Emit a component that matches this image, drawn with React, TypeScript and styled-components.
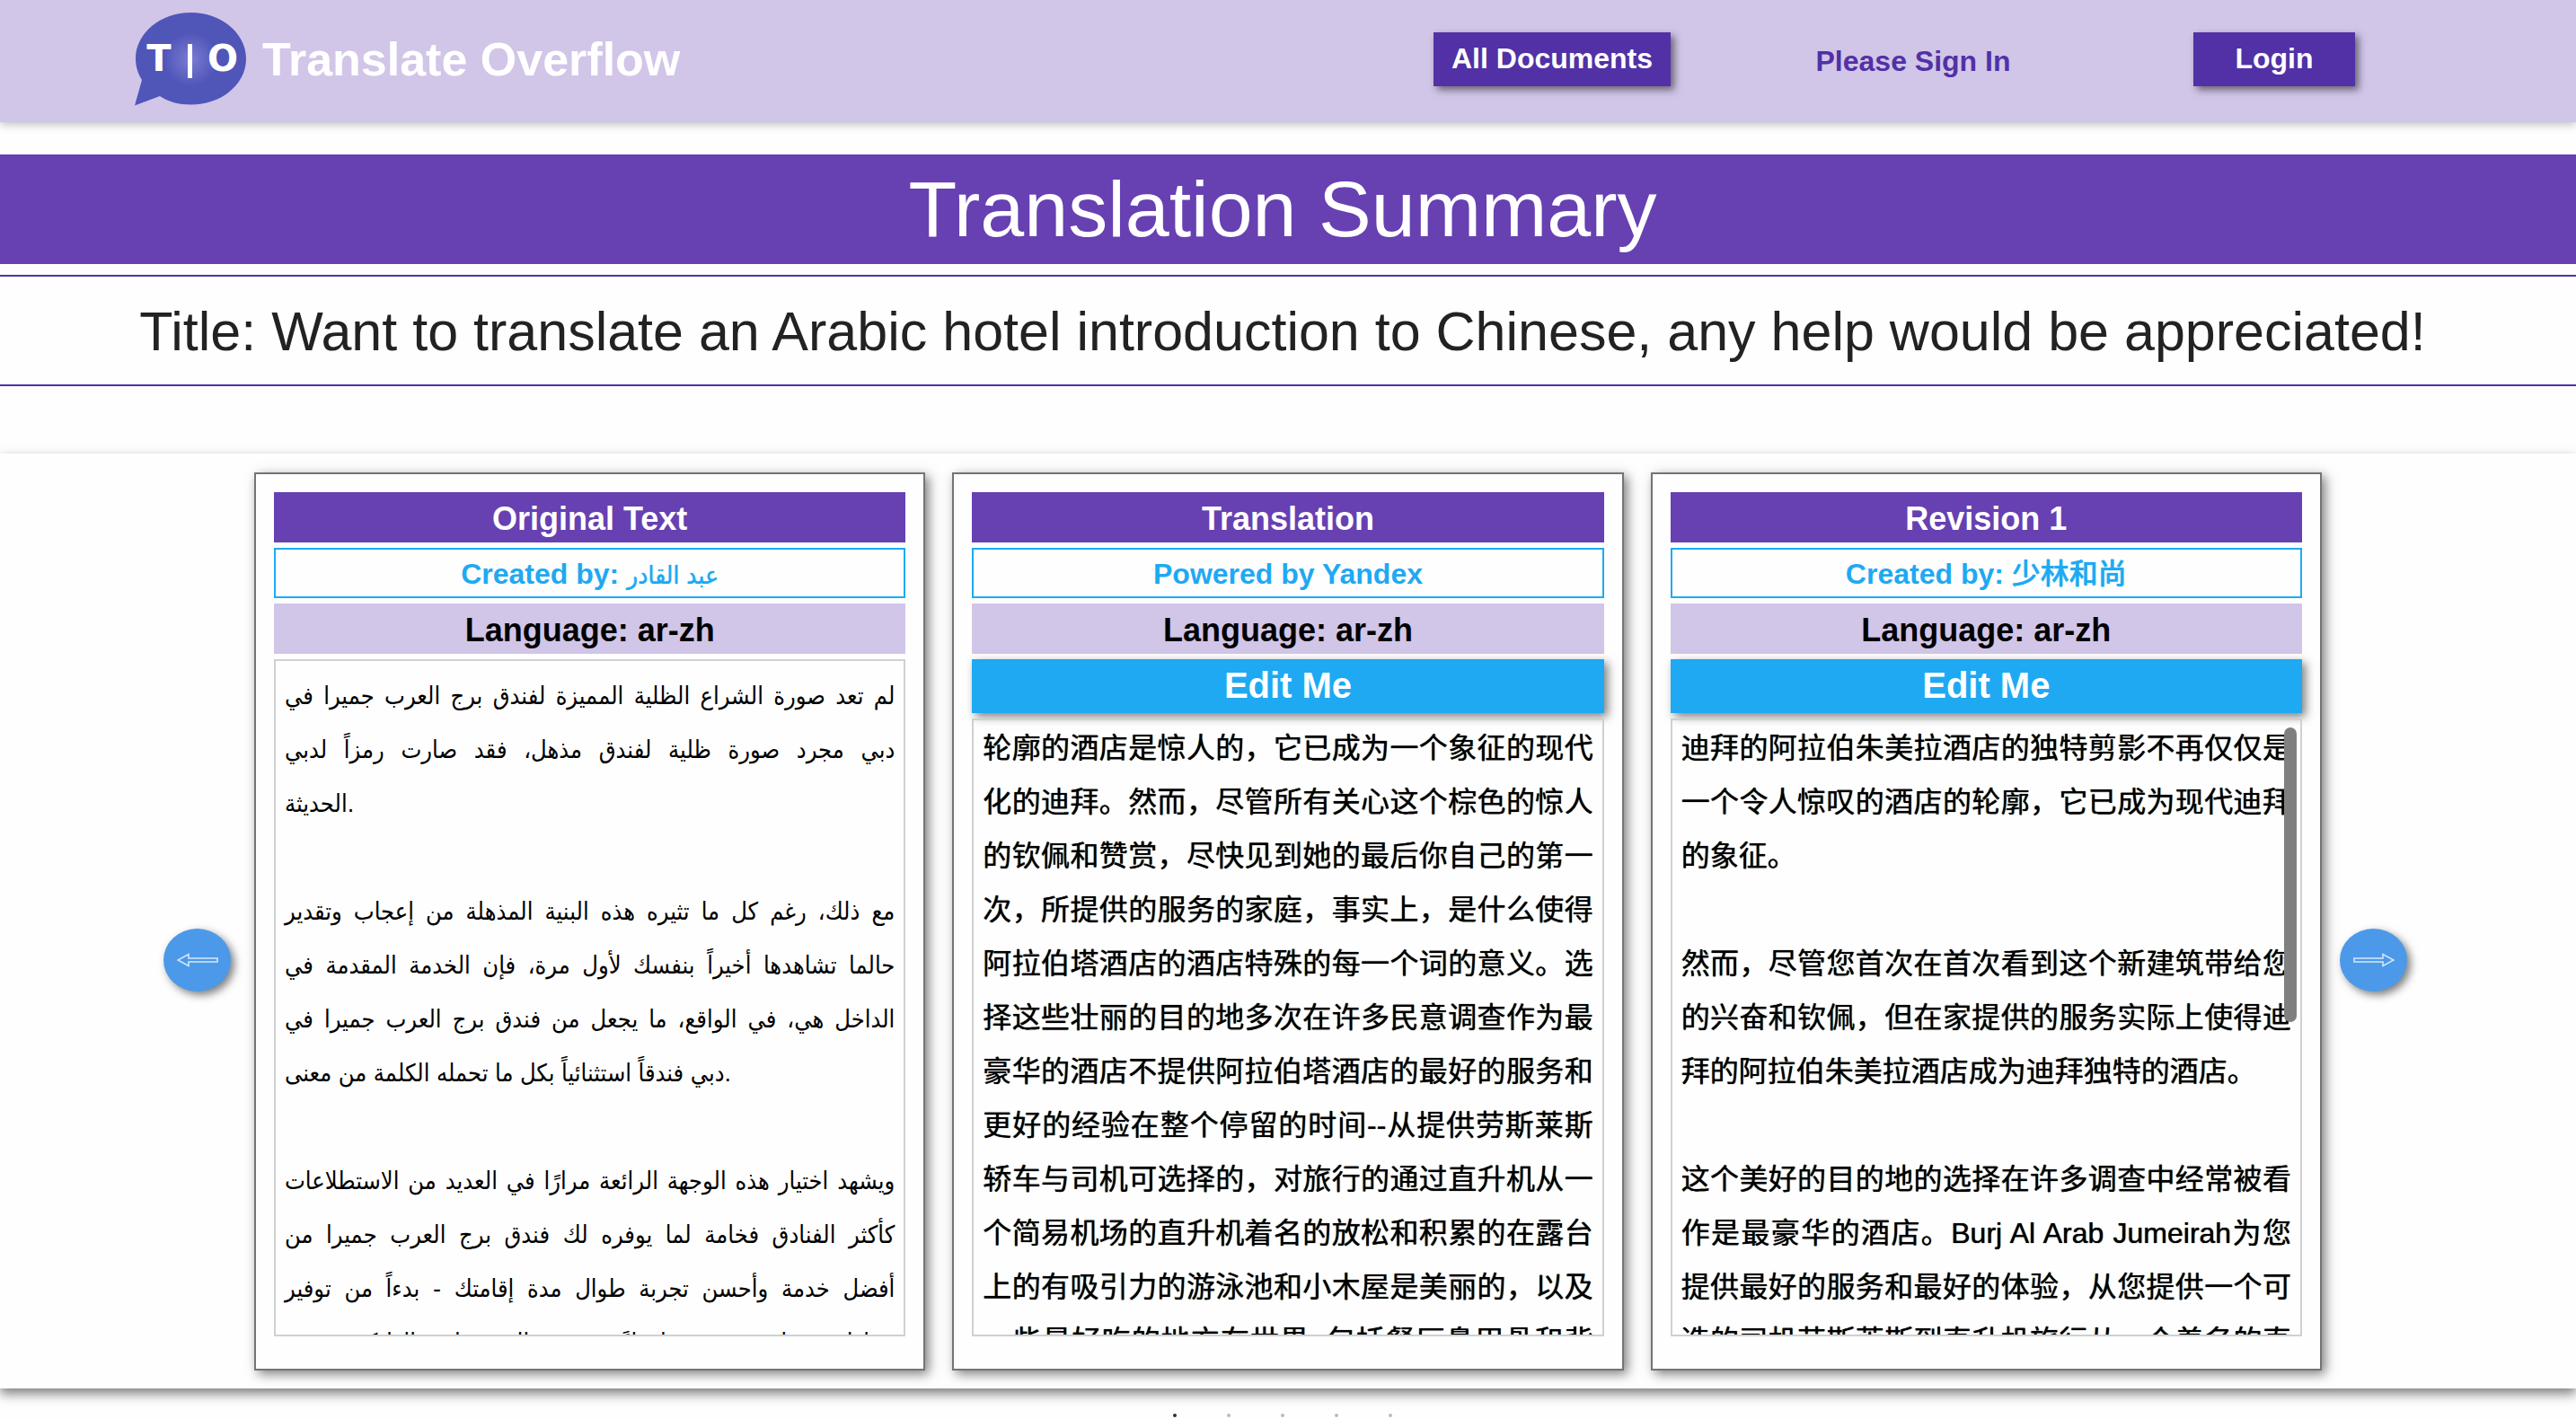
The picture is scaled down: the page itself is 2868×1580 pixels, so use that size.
import React from "react";
import styled, { createGlobalStyle, css } from "styled-components";

const sans = `"Liberation Sans", "Noto Sans CJK SC", "DejaVu Sans", sans-serif`;
const arabicSans = `"Liberation Sans", "DejaVu Sans Condensed", "DejaVu Sans", sans-serif`;

const GlobalStyle = createGlobalStyle`
  *, *::before, *::after { box-sizing: border-box; }
  body { margin: 0; background: #fefefe; font-family: ${sans}; color: #000; overflow: hidden; }
  button { font-family: inherit; border: 0; cursor: pointer; }
  h1, h2, p { margin: 0; font-weight: 400; }
`;

const Header = styled.header`
  position: relative;
  display: flex;
  align-items: center;
  justify-content: space-between;
  height: 136px;
  padding: 0 135px 0 150px;
  background: #d1c5e8;
  box-shadow: 0 2px 10px rgba(40, 60, 50, 0.35);
`;

const Brand = styled.a`
  display: flex;
  align-items: center;
  gap: 16px;
  padding-bottom: 4px;
  color: #fff;
  font-size: 52px;
  font-weight: 700;
  line-height: 60px;
  text-decoration: none;
`;

const Logo = styled.svg`
  width: 126px;
  height: 108px;
`;

const Nav = styled.nav`
  display: grid;
  grid-template-columns: repeat(3, 1fr);
  align-items: center;
  justify-items: center;
  width: 1206px;
`;

const NavButton = styled.button<{ $wide?: boolean }>`
  height: 60px;
  width: ${(p) => (p.$wide ? 264 : 180)}px;
  margin-bottom: 4px;
  padding: 0 0 2px;
  background: #5131a5;
  color: #fff;
  font-size: 32px;
  font-weight: 700;
  box-shadow: 4px 4px 8px rgba(0, 0, 0, 0.5);
`;

const NavNote = styled.span`
  color: #5131a5;
  font-size: 32px;
  font-weight: 700;
  line-height: 36px;
`;

const Banner = styled.h1`
  margin-top: 36px;
  padding-right: 12px;
  background: #6740b2;
  color: #fff;
  font-size: 88px;
  line-height: 122px;
  text-align: center;
`;

const Title = styled.h2`
  margin-top: 12px;
  padding: 2px 12px 0 0;
  border: solid #5131a5;
  border-width: 2px 0;
  color: #222;
  font-size: 61px;
  line-height: 118px;
  text-align: center;
  white-space: nowrap;
`;

const Carousel = styled.section`
  display: flex;
  align-items: center;
  justify-content: center;
  gap: 20px;
  margin-top: 75px;
  padding: 21px 6px 20px 0;
  box-shadow: 0 6px 12px rgba(0, 0, 0, 0.5);
  background: #fefefe;
`;

const Arrow = styled.button`
  flex: none;
  display: grid;
  place-items: center;
  width: 75px;
  height: 70px;
  margin-top: 86px;
  padding: 0;
  border-radius: 50%;
  background: #4c99ea;
  box-shadow: 4px 4px 10px rgba(0, 0, 0, 0.5);
`;

const Slides = styled.div`
  display: grid;
  grid-template-columns: repeat(3, 1fr);
  gap: 30px;
  width: 2302px;
  max-width: calc(100% - 380px);
  margin-left: 6px;
`;

const Card = styled.article`
  display: flex;
  flex-direction: column;
  gap: 6px;
  height: 1000px;
  min-width: 0;
  padding: 20px 20px 36px;
  border: 2px solid #737475;
  background: #fefefe;
  box-shadow: 4px 4px 12px rgba(0, 0, 0, 0.5);
`;

const bar = css`
  flex: none;
  height: 56px;
  text-align: center;
  font-weight: 700;
`;

const CardHeading = styled.h2`
  ${bar}
  background: #6740b2;
  color: #fff;
  font-size: 36px;
  line-height: 60px;
`;

const Author = styled.p`
  ${bar}
  border: 2px solid #1fa9f2;
  color: #1fa9f2;
  font-size: 32px;
  line-height: 54px;
`;

const AuthorName = styled.bdi<{ $arabic?: boolean }>`
  font-weight: 500;
  text-shadow: 0 0 1px currentColor;
  ${(p) =>
    p.$arabic &&
    css`
      font-family: ${arabicSans};
      font-size: 28px;
    `}
`;

const Language = styled.p`
  ${bar}
  background: #d1c5e8;
  font-size: 36px;
  line-height: 60px;
`;

const EditButton = styled.button`
  position: relative;
  flex: none;
  height: 60px;
  padding: 0 0 2px;
  background: #1fa9f2;
  color: #fff;
  font-size: 40px;
  font-weight: 700;
  box-shadow: 4px 4px 10px rgba(0, 0, 0, 0.5);
`;

const TextBox = styled.div<{ $arabic?: boolean }>`
  position: relative;
  flex: 1;
  min-height: 0;
  overflow: hidden;
  padding: 1px 10px 0;
  border: 2px solid #cfd0d0;
  font-size: 32px;
  font-weight: 500;
  line-height: 60px;
  text-shadow: 0 0 1px #000;
  ${(p) =>
    p.$arabic &&
    css`
      padding-top: 9px;
      font-family: ${arabicSans};
      font-size: 27px;
      font-weight: 400;
      text-shadow: none;
    `}
`;

const Line = styled.p<{ $last?: boolean }>`
  min-height: 60px;
  white-space: nowrap;
  text-align: left;
  text-align-last: ${(p) => (p.$last ? "left" : "justify")};
`;

const ScrollThumb = styled.span`
  position: absolute;
  top: 8px;
  right: 4px;
  width: 14px;
  height: 328px;
  border-radius: 7px;
  background: #808080;
`;

const Dots = styled.ul`
  display: flex;
  justify-content: center;
  gap: 56px;
  margin: 0;
  padding: 28px 12px 0 0;
  list-style: none;
`;

const Dot = styled.li<{ $active?: boolean }>`
  width: 4px;
  height: 4px;
  border-radius: 2px;
  background: ${(p) => (p.$active ? "#333" : "#bbb")};
`;

type Slide = {
  heading: string;
  label: string;
  author?: string;
  arabic?: boolean;
  editable?: boolean;
  thumb?: boolean;
  paragraphs: string[][];
};

const slides: Slide[] = [
  {
    heading: "Original Text",
    label: "Created by: ",
    author: "عبد القادر",
    arabic: true,
    paragraphs: [
      [
        "لم تعد صورة الشراع الظلية المميزة لفندق برج العرب جميرا في",
        "دبي مجرد صورة ظلية لفندق مذهل، فقد صارت رمزاً لدبي",
        "الحديثة.",
      ],
      [
        "مع ذلك، رغم كل ما تثيره هذه البنية المذهلة من إعجاب وتقدير",
        "حالما تشاهدها أخيراً بنفسك لأول مرة، فإن الخدمة المقدمة في",
        "الداخل هي، في الواقع، ما يجعل من فندق برج العرب جميرا في",
        "دبي فندقاً استثنائياً بكل ما تحمله الكلمة من معنى.",
      ],
      [
        "ويشهد اختيار هذه الوجهة الرائعة مرارًا في العديد من الاستطلاعات",
        "كأكثر الفنادق فخامة لما يوفره لك فندق برج العرب جميرا من",
        "أفضل خدمة وأحسن تجربة طوال مدة إقامتك - بدءاً من توفير",
        "سيارات رولز رويس وانتهاءً بخدمة المروحيات الهليكوبتر من",
      ],
    ],
  },
  {
    heading: "Translation",
    label: "Powered by Yandex",
    editable: true,
    paragraphs: [
      [
        "轮廓的酒店是惊人的，它已成为一个象征的现代",
        "化的迪拜。然而，尽管所有关心这个棕色的惊人",
        "的钦佩和赞赏，尽快见到她的最后你自己的第一",
        "次，所提供的服务的家庭，事实上，是什么使得",
        "阿拉伯塔酒店的酒店特殊的每一个词的意义。选",
        "择这些壮丽的目的地多次在许多民意调查作为最",
        "豪华的酒店不提供阿拉伯塔酒店的最好的服务和",
        "更好的经验在整个停留的时间--从提供劳斯莱斯",
        "轿车与司机可选择的，对旅行的通过直升机从一",
        "个简易机场的直升机着名的放松和积累的在露台",
        "上的有吸引力的游泳池和小木屋是美丽的，以及",
        "一些最好吃的地方在世界, 包括餐厅鼻甲骨和背",
        "景",
      ],
    ],
  },
  {
    heading: "Revision 1",
    label: "Created by: ",
    author: "少林和尚",
    editable: true,
    thumb: true,
    paragraphs: [
      [
        "迪拜的阿拉伯朱美拉酒店的独特剪影不再仅仅是",
        "一个令人惊叹的酒店的轮廓，它已成为现代迪拜",
        "的象征。",
      ],
      [
        "然而，尽管您首次在首次看到这个新建筑带给您",
        "的兴奋和钦佩，但在家提供的服务实际上使得迪",
        "拜的阿拉伯朱美拉酒店成为迪拜独特的酒店。",
      ],
      [
        "这个美好的目的地的选择在许多调查中经常被看",
        "作是最豪华的酒店。Burj Al Arab Jumeirah为您",
        "提供最好的服务和最好的体验，从您提供一个可",
        "选的司机劳斯莱斯到直升机旅行从一个着名的直",
        "升机场",
      ],
    ],
  },
];

function ArrowIcon({ right }: { right?: boolean }) {
  return (
    <svg width="46" height="16" viewBox="0 0 46 16" fill="none" stroke="#d9e9fb" strokeWidth="1.5" aria-hidden="true">
      <path
        d={
          right
            ? "M1 6H33V1.500L45 8L33 14.500V10H1Z"
            : "M45 6H13V1.500L1 8L13 14.500V10H45Z"
        }
      />
    </svg>
  );
}

function LogoMark() {
  return (
    <Logo viewBox="0 0 126 108" aria-hidden="true">
      <defs>
        <radialGradient id="glow" gradientUnits="userSpaceOnUse" cx="62" cy="54" r="30">
          <stop offset="0" stopColor="#7b7dd3" />
          <stop offset="1" stopColor="#5055b8" />
        </radialGradient>
      </defs>
      <path
        d="M62.500 2C96.500 2 124 25 124 53.500S96.500 104.500 62.500 104.500C49 104.500 37.500 101.500 28 95L0 105.500L8 77C3.500 70 1 62 1 53.500C1 25 28.500 2 62.500 2Z"
        fill="url(#glow)"
      />
      <g fill="#fff" fontFamily="DejaVu Sans, sans-serif" fontWeight="700" fontSize="40" textAnchor="middle">
        <text x="27" y="67">T</text>
        <text x="98" y="67">O</text>
      </g>
      <rect x="59" y="37" width="5" height="38" fill="#fff" />
    </Logo>
  );
}

function SlideCard({ slide }: { slide: Slide }) {
  return (
    <Card>
      <CardHeading>{slide.heading}</CardHeading>
      <Author>
        {slide.label}
        {slide.author && <AuthorName $arabic={slide.arabic}>{slide.author}</AuthorName>}
      </Author>
      <Language>Language: ar-zh</Language>
      {slide.editable && <EditButton type="button">Edit Me</EditButton>}
      <TextBox $arabic={slide.arabic} lang={slide.arabic ? "ar" : "zh-CN"}>
        {slide.paragraphs.map((lines, p) => (
          <React.Fragment key={p}>
            {p > 0 && <Line />}
            {lines.map((text, i) => (
              <Line key={i} $last={i === lines.length - 1 && p < slide.paragraphs.length - 1}>
                {text}
              </Line>
            ))}
          </React.Fragment>
        ))}
        {slide.thumb && <ScrollThumb />}
      </TextBox>
    </Card>
  );
}

export default function App() {
  return (
    <>
      <GlobalStyle />
      <Header>
        <Brand href="#">
          <LogoMark />
          <span>Translate Overflow</span>
        </Brand>
        <Nav>
          <NavButton type="button" $wide>All Documents</NavButton>
          <NavNote>Please Sign In</NavNote>
          <NavButton type="button">Login</NavButton>
        </Nav>
      </Header>
      <main>
        <Banner>Translation Summary</Banner>
        <Title>Title: Want to translate an Arabic hotel introduction to Chinese, any help would be appreciated!</Title>
        <Carousel>
          <Arrow type="button" aria-label="Previous">
            <ArrowIcon />
          </Arrow>
          <Slides>
            {slides.map((s) => (
              <SlideCard key={s.heading} slide={s} />
            ))}
          </Slides>
          <Arrow type="button" aria-label="Next">
            <ArrowIcon right />
          </Arrow>
        </Carousel>
        <Dots>
          {[0, 1, 2, 3, 4].map((n) => (
            <Dot key={n} $active={n === 0} />
          ))}
        </Dots>
      </main>
    </>
  );
}
